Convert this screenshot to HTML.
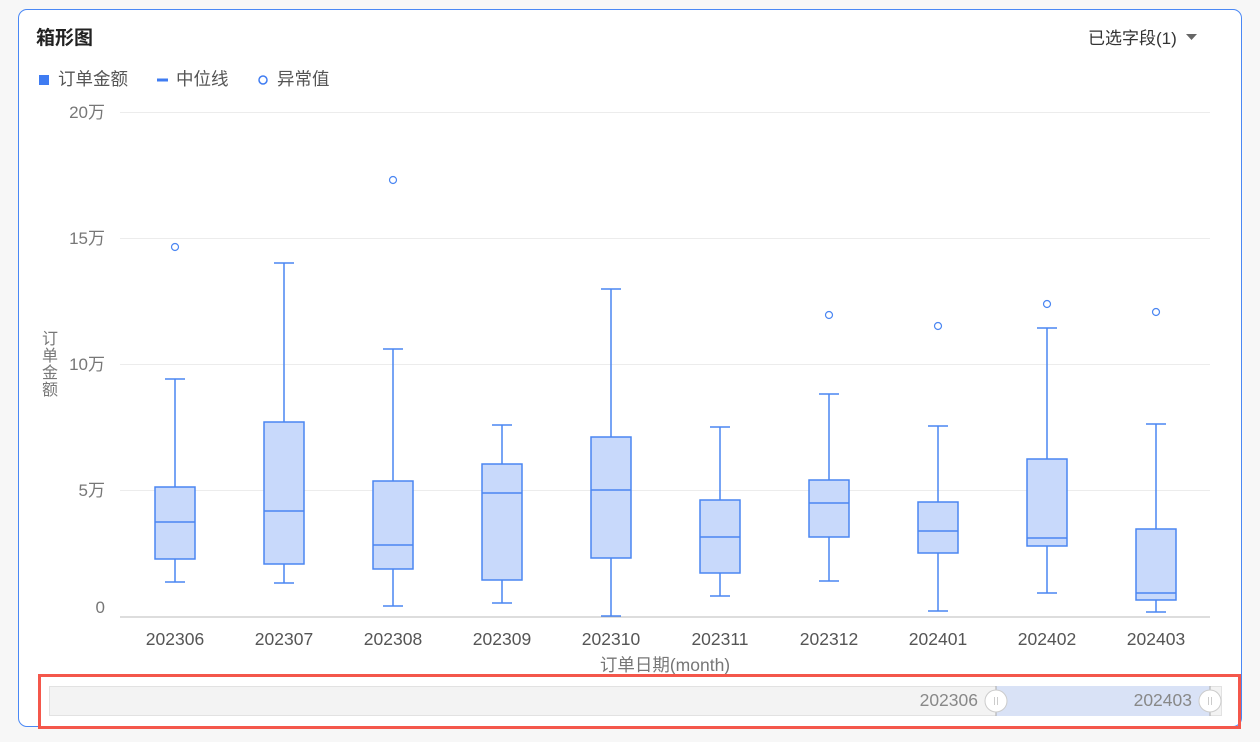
<!DOCTYPE html>
<html><head><meta charset="utf-8"><style>
body{margin:0;width:1260px;height:742px;background:#f7f7f7;font-family:"Liberation Sans","Noto Sans CJK SC",sans-serif;position:relative;overflow:hidden}
.card{position:absolute;left:18px;top:9px;width:1222px;height:716px;border:1px solid #4a88f5;border-radius:9px;background:#fff}
</style></head><body>
<div class="card"></div>
<svg width="1260" height="742" style="position:absolute;left:0;top:0" font-family="Liberation Sans, Noto Sans CJK SC, sans-serif">
<text x="36" y="44" font-size="19" font-weight="bold" fill="#222">箱形图</text>
<text x="1088" y="44" font-size="17" fill="#333">已选字段(1)</text>
<path d="M1186 34h11l-5.5 6z" fill="#666"/>
<rect x="39" y="75" width="10" height="10" fill="#3f7cf2"/>
<text x="58" y="85" font-size="17.5" fill="#555">订单金额</text>
<rect x="157" y="78.5" width="11" height="3" fill="#3f7cf2"/>
<text x="176" y="85" font-size="17.5" fill="#555">中位线</text>
<circle cx="263" cy="80" r="4" fill="none" stroke="#3f7cf2" stroke-width="1.5"/>
<text x="277" y="85" font-size="17.5" fill="#555">异常值</text>
<g stroke="#ececec" stroke-width="1">
<line x1="120" y1="112.5" x2="1210" y2="112.5"/><line x1="120" y1="238.5" x2="1210" y2="238.5"/><line x1="120" y1="364.5" x2="1210" y2="364.5"/><line x1="120" y1="490.5" x2="1210" y2="490.5"/>
</g>
<line x1="120" y1="617" x2="1210" y2="617" stroke="#bbb"/>
<g font-size="17" fill="#777" text-anchor="end">
<text x="105" y="118">20万</text><text x="105" y="244">15万</text><text x="105" y="370">10万</text><text x="105" y="496">5万</text><text x="105" y="613">0</text>
</g>
<g font-size="16" fill="#777" text-anchor="middle">
<text x="50" y="344">订</text><text x="50" y="361">单</text><text x="50" y="378">金</text><text x="50" y="395">额</text>
</g>
<g font-size="17.5" fill="#555" text-anchor="middle">
<text x="175" y="645">202306</text><text x="284" y="645">202307</text><text x="393" y="645">202308</text><text x="502" y="645">202309</text><text x="611" y="645">202310</text><text x="720" y="645">202311</text><text x="829" y="645">202312</text><text x="938" y="645">202401</text><text x="1047" y="645">202402</text><text x="1156" y="645">202403</text>
<text x="665" y="671" fill="#777">订单日期(month)</text>
</g>
<g stroke="#4a86f2" stroke-width="1.5" fill="#c8d9fb">
<path d="M165 379h20M175 379v108M175 559v23M165 582h20"/><rect x="155" y="487" width="40" height="72"/><path d="M155 522h40"/>
<path d="M274 263h20M284 263v159M284 564v19M274 583h20"/><rect x="264" y="422" width="40" height="142"/><path d="M264 511h40"/>
<path d="M383 349h20M393 349v132M393 569v37M383 606h20"/><rect x="373" y="481" width="40" height="88"/><path d="M373 545h40"/>
<path d="M492 425h20M502 425v39M502 580v23M492 603h20"/><rect x="482" y="464" width="40" height="116"/><path d="M482 493h40"/>
<path d="M601 289h20M611 289v148M611 558v58M601 616h20"/><rect x="591" y="437" width="40" height="121"/><path d="M591 490h40"/>
<path d="M710 427h20M720 427v73M720 573v23M710 596h20"/><rect x="700" y="500" width="40" height="73"/><path d="M700 537h40"/>
<path d="M819 394h20M829 394v86M829 537v44M819 581h20"/><rect x="809" y="480" width="40" height="57"/><path d="M809 503h40"/>
<path d="M928 426h20M938 426v76M938 553v58M928 611h20"/><rect x="918" y="502" width="40" height="51"/><path d="M918 531h40"/>
<path d="M1037 328h20M1047 328v131M1047 546v47M1037 593h20"/><rect x="1027" y="459" width="40" height="87"/><path d="M1027 538h40"/>
<path d="M1146 424h20M1156 424v105M1156 600v12M1146 612h20"/><rect x="1136" y="529" width="40" height="71"/><path d="M1136 593h40"/>
</g>
<g fill="#fff" stroke="#4a86f2" stroke-width="1.2">
<circle cx="175" cy="247" r="3.5"/><circle cx="393" cy="180" r="3.5"/><circle cx="829" cy="315" r="3.5"/><circle cx="938" cy="326" r="3.5"/><circle cx="1047" cy="304" r="3.5"/><circle cx="1156" cy="312" r="3.5"/>
</g>
<rect x="49.5" y="686.5" width="1172" height="29" fill="#f3f3f3" stroke="#e2e2e2"/>
<rect x="996" y="686" width="214" height="30" fill="#d9e2f6"/>
<line x1="996" y1="686" x2="996" y2="716" stroke="#aaa"/><line x1="1210" y1="686" x2="1210" y2="716" stroke="#aaa"/>
<g font-size="17.5" fill="#888" text-anchor="end"><text x="978" y="706">202306</text><text x="1192" y="706">202403</text></g>
<g fill="#fff" stroke="#ccc"><circle cx="996" cy="701" r="11"/><circle cx="1210" cy="701" r="11"/></g>
<g stroke="#ccc"><path d="M994.5 697v8M997.5 697v8M1208.5 697v8M1211.5 697v8"/></g>
<rect x="39.5" y="675.5" width="1200" height="52" fill="none" stroke="#f4574b" stroke-width="3"/>
</svg>
</body></html>
